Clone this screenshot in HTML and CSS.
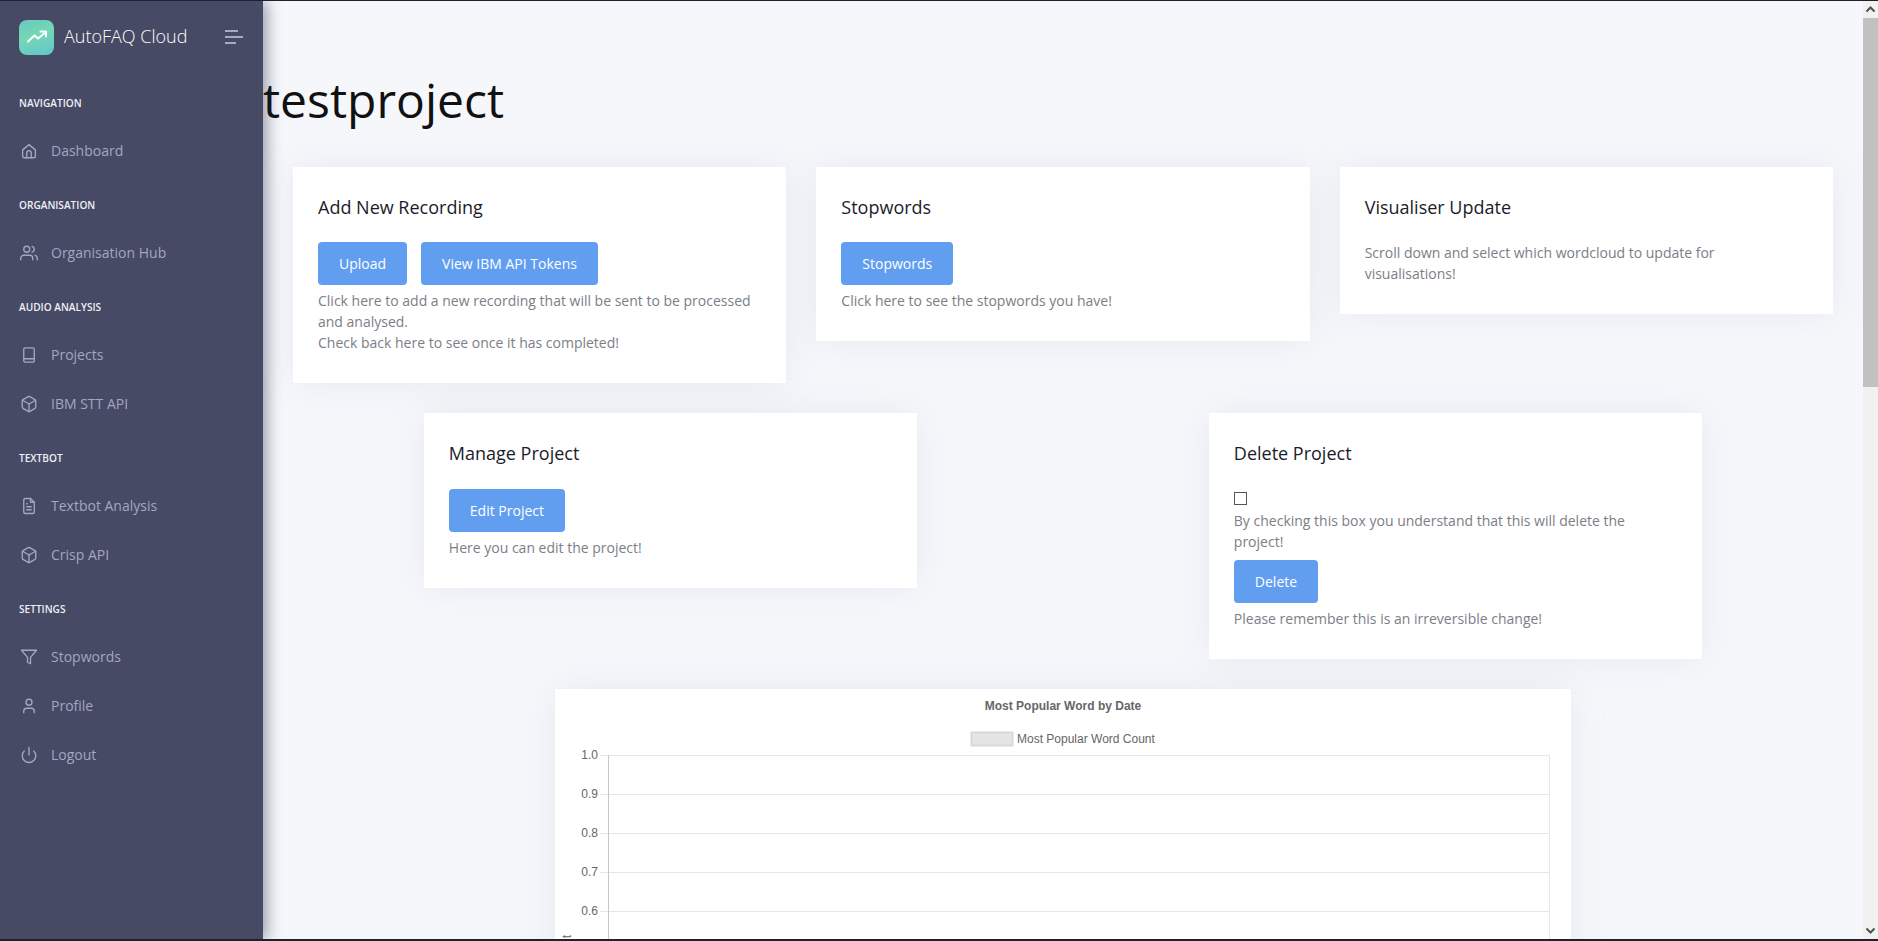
FILE: index.html
```html
<!DOCTYPE html>
<html lang="en">
<head>
<meta charset="utf-8">
<title>testproject</title>
<link rel="stylesheet" href="styles.css">
</head>
<body>
<div class="app">
  <aside class="sidebar">
    <div class="brand">
      <span class="logo">
        <svg viewBox="0 0 24 24" class="logo-arrow"><polyline points="3 16.5 9.5 10.5 13 13.5 21 7"/><polyline points="15.5 6.5 21 6.5 21 11.5"/></svg>
      </span>
      <span class="brand-name">AutoFAQ Cloud</span>
      <svg class="burger" viewBox="0 0 18 14"><path d="M0 1h13M0 7h18M0 13h11"/></svg>
    </div>
    <nav class="nav">
      <div class="nav-label">NAVIGATION</div>
      <a class="nav-item"><svg class="ico" viewBox="0 0 24 24"><path d="M3.5 10.5 12 3.5l8.5 7V19a2 2 0 0 1-2 2h-13a2 2 0 0 1-2-2z"/><path d="M9 21v-6.5a3 3 0 0 1 6 0V21"/></svg>Dashboard</a>
      <div class="nav-label">ORGANISATION</div>
      <a class="nav-item"><svg class="ico" viewBox="0 0 24 24"><path d="M17 21v-2a4 4 0 0 0-4-4H5a4 4 0 0 0-4 4v2"/><circle cx="9" cy="7" r="4"/><path d="M23 21v-2a4 4 0 0 0-3-3.87"/><path d="M16 3.13a4 4 0 0 1 0 7.75"/></svg>Organisation Hub</a>
      <div class="nav-label">AUDIO ANALYSIS</div>
      <a class="nav-item"><svg class="ico" viewBox="0 0 24 24"><rect x="5" y="2.5" width="14" height="19" rx="2"/><path d="M5 17h14"/></svg>Projects</a>
      <a class="nav-item"><svg class="ico" viewBox="0 0 24 24"><path d="M21 16V8a2 2 0 0 0-1-1.73l-7-4a2 2 0 0 0-2 0l-7 4A2 2 0 0 0 3 8v8a2 2 0 0 0 1 1.73l7 4a2 2 0 0 0 2 0l7-4A2 2 0 0 0 21 16z"/><path d="M3.3 7 12 12l8.7-5"/><path d="M12 22V12"/></svg>IBM STT API</a>
      <div class="nav-label">TEXTBOT</div>
      <a class="nav-item"><svg class="ico" viewBox="0 0 24 24"><path d="M14 2H7a2 2 0 0 0-2 2v16a2 2 0 0 0 2 2h10a2 2 0 0 0 2-2V7z"/><path d="M14 2v5h5"/><path d="M9 13h6M9 17h6M9 9h1"/></svg>Textbot Analysis</a>
      <a class="nav-item"><svg class="ico" viewBox="0 0 24 24"><path d="M21 16V8a2 2 0 0 0-1-1.73l-7-4a2 2 0 0 0-2 0l-7 4A2 2 0 0 0 3 8v8a2 2 0 0 0 1 1.73l7 4a2 2 0 0 0 2 0l7-4A2 2 0 0 0 21 16z"/><path d="M3.3 7 12 12l8.7-5"/><path d="M12 22V12"/></svg>Crisp API</a>
      <div class="nav-label">SETTINGS</div>
      <a class="nav-item"><svg class="ico" viewBox="0 0 24 24"><path d="M22 3H2l8 9.46V19l4 2v-8.54z"/></svg>Stopwords</a>
      <a class="nav-item"><svg class="ico" viewBox="0 0 24 24"><path d="M19 21v-2a4 4 0 0 0-4-4H9a4 4 0 0 0-4 4v2"/><circle cx="12" cy="7" r="4"/></svg>Profile</a>
      <a class="nav-item"><svg class="ico" viewBox="0 0 24 24"><path d="M18.36 6.64a9 9 0 1 1-12.73 0"/><path d="M12 2v10"/></svg>Logout</a>
    </nav>
  </aside>
  <main class="main">
    <h1 class="page-title">testproject</h1>
    <div class="row">
      <section class="card">
        <h2 class="card-title">Add New Recording</h2>
        <div class="btn-line"><a class="btn">Upload</a><a class="btn">View IBM API Tokens</a></div>
        <p class="text">Click here to add a new recording that will be sent to be processed and analysed.<br>Check back here to see once it has completed!</p>
      </section>
      <section class="card">
        <h2 class="card-title">Stopwords</h2>
        <div class="btn-line"><a class="btn">Stopwords</a></div>
        <p class="text">Click here to see the stopwords you have!</p>
      </section>
      <section class="card">
        <h2 class="card-title">Visualiser Update</h2>
        <p class="text">Scroll down and select which wordcloud to update for visualisations!</p>
      </section>
    </div>
    <div class="row row-around">
      <section class="card">
        <h2 class="card-title">Manage Project</h2>
        <div class="btn-line"><a class="btn">Edit Project</a></div>
        <p class="text">Here you can edit the project!</p>
      </section>
      <section class="card">
        <h2 class="card-title">Delete Project</h2>
        <div class="check-line"><input type="checkbox" class="check"></div>
        <p class="text text-gap">By checking this box you understand that this will delete the project!</p>
        <div class="btn-line"><a class="btn">Delete</a></div>
        <p class="text">Please remember this is an irreversible change!</p>
      </section>
    </div>
    <div class="row row-center">
      <section class="card chart-card">
        <svg class="chart" viewBox="0 0 1016 508">
          <text class="chart-title" x="508" y="21" text-anchor="middle">Most Popular Word by Date</text>
          <rect class="legend-box" x="416.500" y="43.500" width="41" height="13"/>
          <text class="chart-text" x="462" y="53.500">Most Popular Word Count</text>
          <g class="grid">
            <path d="M45 66.500H994.500M45 105.500H994.500M45 144.500H994.500M45 183.500H994.500M45 222.500H994.500M45 261.500H994.500M45 300.500H994.500M45 339.500H994.500M45 378.500H994.500M45 417.500H994.500"/>
            <path d="M994.500 66V417"/>
          </g>
          <path class="axis" d="M53.500 66V418"/>
          <g class="chart-text tick-labels">
            <text x="43" y="70">1.0</text>
            <text x="43" y="109">0.9</text>
            <text x="43" y="148">0.8</text>
            <text x="43" y="187">0.7</text>
            <text x="43" y="226">0.6</text>
            <text x="43" y="265">0.5</text>
          </g>
          <text class="chart-text" transform="translate(16 246) rotate(-90)" text-anchor="end">Most Popular Word Count</text>
        </svg>
      </section>
    </div>
  </main>
  <div class="scrollbar">
    <svg class="sb-arrow" viewBox="0 0 15 17"><path d="M3.500 10.500 7.500 6.500l4 4"/></svg>
    <div class="sb-thumb"></div>
    <div class="sb-track"></div>
    <svg class="sb-arrow" viewBox="0 0 15 17"><path d="M3.500 6.500 7.500 10.500l4-4"/></svg>
  </div>
</div>
</body>
</html>
```

FILE: styles.css
```css
* { box-sizing: border-box; }

html, body {
  margin: 0;
  height: 100%;
  overflow: hidden;
}

body {
  font-family: "Open Sans", "Liberation Sans", sans-serif;
  background: #1f2030;
  padding: 1px 0 2px;
}

.app {
  display: flex;
  height: 100%;
  background: #f5f7fb;
  overflow: hidden;
}

/* Sidebar */
.sidebar {
  flex: 0 0 263px;
  background: #464a64;
  box-shadow: 4px 0 14px rgba(40, 42, 70, 0.45);
  position: relative;
  z-index: 2;
}

.brand {
  display: flex;
  align-items: center;
  height: 72px;
  padding: 0 20px 0 19px;
}

.logo {
  flex: 0 0 35px;
  height: 35px;
  border-radius: 8px;
  background: linear-gradient(160deg, #6bc8c0 0%, #74d8b4 45%, #62c4cf 100%);
  display: flex;
  align-items: center;
  justify-content: center;
}

.logo-arrow {
  width: 24px;
  height: 24px;
  fill: none;
  stroke: #fff;
  stroke-width: 2;
  stroke-linecap: round;
  stroke-linejoin: round;
}

.brand-name {
  margin: 0 0 2px 10px;
  font-size: 18px;
  font-weight: 300;
  color: #fff;
  flex: 1;
  white-space: nowrap;
}

.burger {
  width: 18px;
  height: 14px;
  fill: none;
  stroke: #c9cbdc;
  stroke-width: 1.6;
}

.nav-label {
  margin-top: 6px;
  padding: 17px 19px 15px;
  line-height: 15px;
  font-size: 10.100px;
  font-weight: 600;
  color: #eef0f6;
}

.nav-item {
  display: flex;
  align-items: center;
  height: 49px;
  padding-left: 20px;
  font-size: 14px;
  color: #a3a7c0;
}

.ico {
  flex: 0 0 18px;
  width: 18px;
  height: 18px;
  margin-right: 13px;
  fill: none;
  stroke: #a3a7c0;
  stroke-width: 1.800;
  stroke-linecap: round;
  stroke-linejoin: round;
}

/* Main */
.main {
  flex: 1;
  min-width: 0;
  overflow: hidden;
}

.page-title {
  margin: 0;
  padding-top: 70px;
  height: 166px;
  font-size: 48px;
  line-height: 57px;
  font-weight: 400;
  color: #111;
}

.row {
  display: flex;
  align-items: flex-start;
  padding: 0 30px;
  gap: 30px;
  margin-bottom: 30px;
}

.row-around {
  gap: 0;
  padding: 0 15px;
  justify-content: space-around;
}

.row-center {
  justify-content: center;
}

.card {
  flex: 0 0 493.330px;
  background: #fff;
  padding: 25px 25px 30px;
  box-shadow: 0 0 35px rgba(154, 161, 171, 0.15);
}

.card-title {
  margin: 0 0 20px;
  font-size: 18px;
  line-height: 30px;
  font-weight: 400;
  color: #1c1b2b;
}

.row-around .card-title {
  margin-bottom: 21px;
}

.btn-line {
  display: flex;
  gap: 14px;
  margin-bottom: 5px;
}

.btn {
  display: block;
  height: 43px;
  padding: 0 21px;
  line-height: 43px;
  font-size: 14px;
  color: #fff;
  background: #629ef0;
  border-radius: 4px;
}

.text {
  margin: 0;
  font-size: 14px;
  line-height: 21px;
  color: #7b7e86;
}

.text-gap {
  margin-bottom: 8px;
}

.check-line {
  height: 21px;
  padding-top: 3px;
}

.check {
  display: block;
  appearance: none;
  width: 13px;
  height: 13px;
  margin: 0;
  border: 1px solid #555;
  background: #fff;
}

/* Chart */
.chart-card {
  flex: 0 0 1016.670px;
  padding: 0;
}

.chart {
  display: block;
  width: 1016px;
  height: 508px;
}

.chart-title {
  font: 700 12px "Liberation Sans", sans-serif;
  fill: #666;
}

.chart-text {
  font: 400 12px "Liberation Sans", sans-serif;
  fill: #666;
}

.tick-labels {
  text-anchor: end;
}

.legend-box {
  fill: #e5e5e5;
  stroke: #d8d8d8;
  stroke-width: 2;
}

.grid path {
  fill: none;
  stroke: #e6e6e6;
  stroke-width: 1;
}

.axis {
  fill: none;
  stroke: #c8c8c8;
  stroke-width: 1;
}

/* Scrollbar */
.scrollbar {
  flex: 0 0 15px;
  display: flex;
  flex-direction: column;
  background: #f1f1f1;
}

.sb-arrow {
  flex: 0 0 17px;
  width: 15px;
  height: 17px;
  fill: none;
  stroke: #505050;
  stroke-width: 2;
}

.sb-thumb {
  flex: 0 0 369px;
  background: #c1c1c1;
}

.sb-track {
  flex: 1;
}
```
